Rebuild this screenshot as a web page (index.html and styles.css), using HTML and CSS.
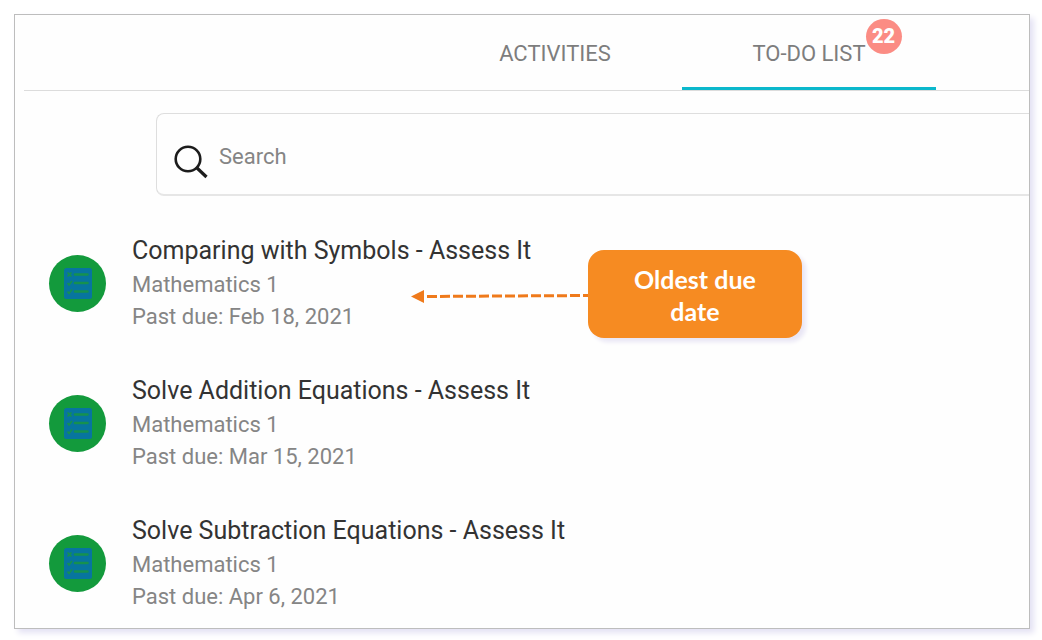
FILE: index.html
```html
<!DOCTYPE html>
<html lang="en">
<head>
<meta charset="utf-8">
<meta name="viewport" content="width=device-width, initial-scale=1">
<title>To-do list</title>
<link rel="stylesheet" href="styles.css">
</head>
<body>
<svg class="sprite" aria-hidden="true">
  <symbol id="icon-list" viewBox="0 0 28 31">
    <rect width="28" height="31" rx="2.500" fill="#07759f"/>
    <g stroke="#16914f" fill="none">
      <path d="M11 6.500h12.500M11 15h12.500M11 23.500h12.500" stroke-width="2.600" stroke-linecap="round"/>
      <path d="M3.500 4.500l4 4M7.500 4.500l-4 4M3.500 15l1.500 2 3-4M3.500 23.500l1.500 2 3-4" stroke-width="1.600"/>
    </g>
  </symbol>
</svg>
<main class="panel">
  <nav class="tabs" aria-label="Sections">
    <button class="tab" type="button">ACTIVITIES</button>
    <button class="tab tab-active" type="button"><span class="tab-label">TO-DO LIST<span class="badge">22</span></span></button>
  </nav>
  <label class="search">
    <svg class="search-icon" viewBox="0 0 34 34" fill="none" stroke="#1c1c1c" aria-hidden="true">
      <circle cx="14" cy="14" r="12.300" stroke-width="2.600"/>
      <path d="M23 23l9.500 9" stroke-width="3.200"/>
    </svg>
    <input class="search-input" type="search" placeholder="Search" aria-label="Search">
  </label>
  <ul class="list">
    <li class="item">
      <span class="avatar"><svg class="list-icon" aria-hidden="true"><use href="#icon-list"/></svg></span>
      <div class="text">
        <h2 class="title">Comparing with Symbols - Assess It</h2>
        <p class="meta">Mathematics 1</p>
        <p class="meta">Past due: Feb 18, 2021</p>
      </div>
      <div class="note">
        <svg class="arrow" viewBox="0 0 177 18" aria-hidden="true">
          <path d="M0 11.500L13 5V18z" fill="#ef7a1b"/>
          <path d="M177 10.500L13 11.500" stroke="#ef7a1b" stroke-width="3" stroke-dasharray="10 3" stroke-dashoffset="5"/>
        </svg>
        <p class="callout">Oldest due date</p>
      </div>
    </li>
    <li class="item">
      <span class="avatar"><svg class="list-icon" aria-hidden="true"><use href="#icon-list"/></svg></span>
      <div class="text">
        <h2 class="title">Solve Addition Equations - Assess It</h2>
        <p class="meta">Mathematics 1</p>
        <p class="meta">Past due: Mar 15, 2021</p>
      </div>
    </li>
    <li class="item">
      <span class="avatar"><svg class="list-icon" aria-hidden="true"><use href="#icon-list"/></svg></span>
      <div class="text">
        <h2 class="title">Solve Subtraction Equations - Assess It</h2>
        <p class="meta">Mathematics 1</p>
        <p class="meta">Past due: Apr 6, 2021</p>
      </div>
    </li>
  </ul>
</main>
</body>
</html>
```
FILE: styles.css
```css
* {
  box-sizing: border-box;
}

body {
  margin: 0;
  padding: 14px 12px 11px 14px;
  min-height: 100vh;
  display: flex;
  background: #fff;
  color: #333;
  font-family: Roboto, "Liberation Sans", sans-serif;
}

h2, p, ul {
  margin: 0;
  padding: 0;
}

.sprite {
  position: absolute;
  width: 0;
  height: 0;
}

.panel {
  flex: 1;
  min-width: 0;
  background: #fefefe;
  border: 1px solid #bdbdbd;
  box-shadow: 4px 4px 6px #e4e2f4;
}

.tabs {
  display: flex;
  justify-content: flex-end;
  margin-left: 9px;
  padding-right: 93px;
  border-bottom: 1px solid #dcdcdc;
}

.tab {
  width: 254px;
  height: 75px;
  padding: 5px 0 0;
  border: 0;
  border-bottom: 3px solid transparent;
  background: none;
  color: #7d7d7d;
  font: 400 22px/32px Roboto, "Liberation Sans", sans-serif;
}

.tab-active {
  border-bottom-color: #0bb8cc;
}

.tab-label {
  position: relative;
}

.badge {
  position: absolute;
  left: 100%;
  bottom: 12px;
  width: 36px;
  height: 35px;
  border-radius: 50%;
  background: #fb8c84;
  color: #fff;
  font-size: 20px;
  font-weight: 900;
  line-height: 34px;
  text-align: center;
}

.search {
  display: flex;
  align-items: center;
  gap: 11px;
  height: 83px;
  margin: 22px 0 0 141px;
  padding-left: 17px;
  border: 1px solid #dedede;
  border-bottom: 2px solid #e6e6e6;
  border-right: 0;
  border-radius: 8px 0 0 8px;
}

.search-icon {
  width: 34px;
  height: 34px;
  margin-top: 16px;
}

.search-input {
  flex: 1;
  min-width: 0;
  height: 32px;
  margin-top: 6px;
  padding: 0;
  border: 0;
  outline: 0;
  background: none;
  color: #303133;
  font: 400 22px/32px Roboto, "Liberation Sans", sans-serif;
}

.search-input::placeholder {
  color: #858585;
}

.list {
  display: flex;
  flex-direction: column;
  gap: 40px;
  padding: 37px 0 0 34px;
  list-style: none;
}

.item {
  position: relative;
  display: flex;
  align-items: center;
  gap: 26px;
}

.avatar {
  display: grid;
  place-items: center;
  flex: none;
  width: 57px;
  height: 57px;
  border-radius: 50%;
  background: #139a3c;
}

.list-icon {
  width: 28px;
  height: 31px;
}

.title {
  font-size: 25px;
  font-weight: 400;
  line-height: 36px;
}

.meta {
  color: #858585;
  font-size: 22px;
  line-height: 32px;
}

.note {
  position: absolute;
  left: 362px;
  top: 17px;
  display: flex;
  align-items: center;
}

.arrow {
  width: 177px;
  height: 18px;
}

.callout {
  width: 214px;
  padding: 13px 40px 11px;
  border-radius: 16px;
  background: #f68b22;
  box-shadow: 4px 4px 4px #e9e6f5;
  color: #fff;
  font-family: Lato, "Open Sans", sans-serif;
  font-size: 25px;
  font-weight: 700;
  line-height: 32px;
  text-align: center;
}
```
